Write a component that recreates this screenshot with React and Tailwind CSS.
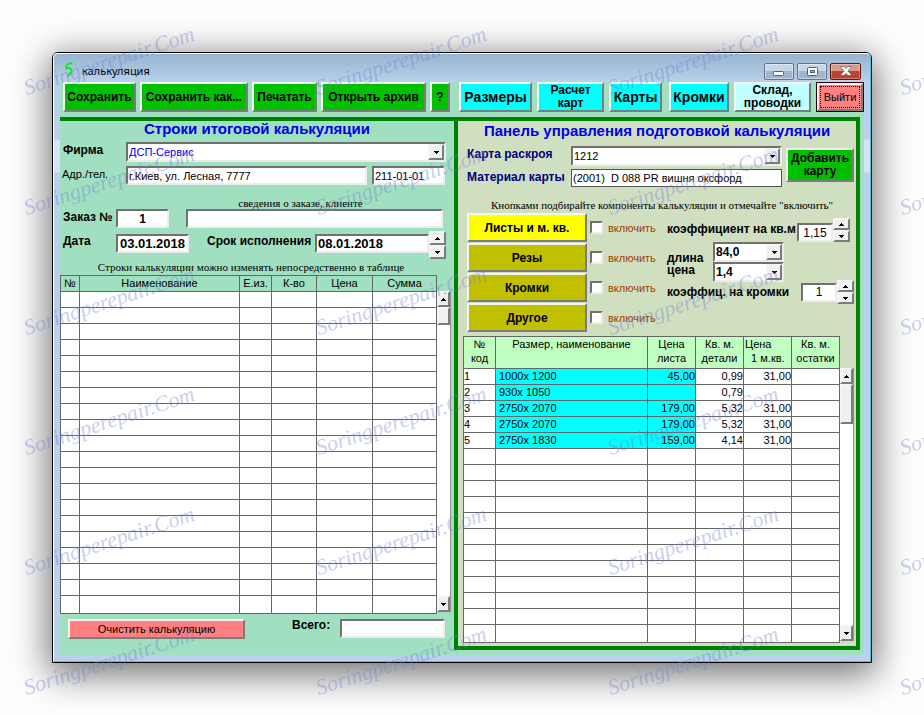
import { clsx } from 'clsx';

const SANS = "font-['Liberation_Sans',Arial,sans-serif]";
const SERIF = "font-['Liberation_Serif','Times_New_Roman',serif]";

const RAISED = 'border-2 border-t-[#f4f4f4] border-l-[#f4f4f4] border-r-[#7c7c7c] border-b-[#7c7c7c]';
const SUNKEN = 'border-2 border-t-[#707070] border-l-[#707070] border-r-[#ececec] border-b-[#ececec]';

const CARDS = [
  { id: 1, size: '1000x 1200', price: '45,00', area: '0,99', rate: '31,00' },
  { id: 2, size: '930x 1050', price: '', area: '0,79', rate: '' },
  { id: 3, size: '2750x 2070', price: '179,00', area: '5,32', rate: '31,00' },
  { id: 4, size: '2750x 2070', price: '179,00', area: '5,32', rate: '31,00' },
  { id: 5, size: '2750x 1830', price: '159,00', area: '4,14', rate: '31,00' },
];

const Triangle = ({ up }) => (
  <svg width="5" height="3" viewBox="0 0 5 3" shapeRendering="crispEdges" aria-hidden="true">
    <path d={up ? 'M2 0h1v1h1v1h1v1H0V2h1V1h1z' : 'M0 0h5v1H4v1H3v1H2V2H1V1H0z'} fill="#000" />
  </svg>
);

const Button = ({ className, children }) => (
  <button type="button" className={clsx('flex items-center justify-center text-center text-black', RAISED, className)}>
    {children}
  </button>
);

const Field = ({ className, ...props }) => (
  <input type="text" className={clsx('h-[19px] min-w-0 bg-white px-px leading-[15px] outline-none', SUNKEN, className)} {...props} />
);

const Combo = ({ id, value, className, selectClass }) => (
  <div className={clsx('relative h-5 min-w-0', className)}>
    <select id={id} className={clsx('block h-full w-full appearance-none bg-white px-px leading-4 outline-none', SUNKEN, selectClass)}>
      <option>{value}</option>
    </select>
    <span className={clsx('pointer-events-none absolute top-0.5 right-0.5 bottom-0.5 flex w-4 items-center justify-center bg-[#f0f0f0]', RAISED)}>
      <Triangle />
    </span>
  </div>
);

const Spinner = ({ className }) => (
  <div className={clsx('flex w-[17px] shrink-0 flex-col', className)}>
    <button type="button" aria-label="Больше" className={clsx('flex flex-1 items-center justify-center bg-[#f0f0f0]', RAISED)}>
      <Triangle up />
    </button>
    <button type="button" aria-label="Меньше" className={clsx('flex flex-1 items-center justify-center bg-[#f0f0f0]', RAISED)}>
      <Triangle />
    </button>
  </div>
);

const ScrollBar = ({ thumb, className }) => (
  <div className={clsx('flex w-3.5 shrink-0 flex-col border-r border-[#909090] bg-white', className)}>
    <span className={clsx('flex h-4 items-center justify-center bg-[#f0f0f0]', RAISED)}>
      <Triangle up />
    </span>
    <span className={clsx('bg-[#f0f0f0]', RAISED, thumb)} />
    <span className={clsx('mt-auto flex h-4 items-center justify-center bg-[#f0f0f0]', RAISED)}>
      <Triangle />
    </span>
  </div>
);

const Th = ({ className, children }) => (
  <th className={clsx('border-r border-b border-[#666] p-0 align-top font-normal', className)}>{children}</th>
);

const Td = ({ className, children }) => (
  <td className={clsx('overflow-hidden border-r border-b border-[#666] p-0 leading-[15px] whitespace-pre', className)}>{children}</td>
);

const TitleBar = () => (
  <header className="flex h-7 items-center pr-[3px] pl-1">
    <svg width="14" height="18" viewBox="0 0 14 18" className="mt-1" aria-hidden="true">
      <path d="M8.500 2.500H4.500L2 5.500l.500 2L5 7l2 1 .500 2.500L6 13l-3 2" fill="none" stroke="#00f020" strokeWidth="1.800" />
    </svg>
    <h1 className="mt-1.5 ml-1 font-['Noto_Sans','Open_Sans',sans-serif] text-[11px] leading-4">калькуляция</h1>
    <div className="mt-1.5 ml-auto flex gap-[3px]">
      <button type="button" aria-label="Свернуть" className="flex h-[17px] w-[30px] items-center justify-center rounded-xs border border-[#5f738c] bg-linear-to-b from-[#c6d6e8] from-45% to-[#9db5cf] to-50% shadow-[inset_0_0_0_1px_#ffffff70]">
        <svg width="12" height="5" viewBox="0 0 12 5" className="mt-1"><rect x=".5" y=".5" width="10" height="4" rx="1" fill="#fff" stroke="#555f70" /></svg>
      </button>
      <button type="button" aria-label="Развернуть" className="flex h-[17px] w-[30px] items-center justify-center rounded-xs border border-[#5f738c] bg-linear-to-b from-[#c6d6e8] from-45% to-[#9db5cf] to-50% shadow-[inset_0_0_0_1px_#ffffff70]">
        <svg width="11" height="9" viewBox="0 0 11 9">
          <rect x=".5" y=".5" width="10" height="8" rx="1" fill="#fff" stroke="#555f70" />
          <rect x="3.500" y="3.500" width="4" height="2" fill="#9db5cf" stroke="#555f70" />
        </svg>
      </button>
      <button type="button" aria-label="Закрыть" className="flex h-[17px] w-[31px] items-center justify-center rounded-xs border border-[#5c1a16] bg-linear-to-b from-[#dd9a8c] from-45% to-[#c0412a] to-50% shadow-[inset_0_0_0_1px_#ffffff50]">
        <svg width="12" height="10" viewBox="0 0 12 10">
          <path d="M1 .5h3l2 2 2-2h3v1.200L7.800 5 11 8.300v1.200H8l-2-2-2 2H1V8.300L4.200 5 1 1.700z" fill="#fff" stroke="#555f70" strokeWidth=".8" />
        </svg>
      </button>
    </div>
  </header>
);

const Toolbar = () => (
  <nav className="flex h-[30px] pl-[3px] text-xs font-bold whitespace-nowrap">
    <div className="flex gap-1">
      <Button className="w-[73px] bg-[#00c000]">Сохранить</Button>
      <Button className="w-[108px] bg-[#00c000]">Сохранить как...</Button>
      <Button className="w-[65px] bg-[#00c000]">Печатать</Button>
      <Button className="w-[105px] bg-[#00c000]">Открыть архив</Button>
      <Button className="w-5 bg-[#00c000]">?</Button>
    </div>
    <div className="ml-[9px] flex gap-[5px]">
      <Button className="w-[73px] bg-[#00ffff] text-sm">Размеры</Button>
      <Button className="w-[67px] bg-[#00ffff] leading-[13px]">Расчет<br />карт</Button>
      <Button className="w-[53px] bg-[#00ffff] text-sm">Карты</Button>
    </div>
    <div className="ml-auto flex gap-[5px]">
      <Button className="w-[60px] bg-[#00ffff] text-sm">Кромки</Button>
      <Button className="w-[77px] bg-[#c0ffff] leading-[13px]">Склад,<br />проводки</Button>
      <button type="button" className="w-12 border border-[#300000] bg-[#ff8080] text-[11px] font-normal">
        <span className={clsx('flex h-full items-center justify-center p-px', RAISED)}>
          <span className="flex h-full w-full items-center justify-center border border-dotted border-black">Выйти</span>
        </span>
      </button>
    </div>
  </nav>
);

const EstimatePanel = () => (
  <section className="flex min-w-0 flex-[394] flex-col text-[11px] leading-4">
    <h2 className="h-[21px] text-center text-[15px] leading-4 font-bold text-[#0000e8]">Строки итоговой калькуляции</h2>

    <div className="flex pr-2 pl-[3px]">
      <label htmlFor="firm" className="w-[63px] text-xs font-bold">Фирма</label>
      <Combo id="firm" value="ДСП-Сервис" className="flex-1" selectClass="text-[#0000e8]" />
    </div>
    <div className="mt-1 flex pr-[9px] pl-0.5">
      <label htmlFor="address" className="w-16">Адр./тел.</label>
      <Field id="address" defaultValue="г.Киев, ул. Лесная, 7777" className="flex-1" />
      <Field aria-label="Телефон" defaultValue="211-01-01" className="ml-[5px] w-[73px]" />
    </div>

    <p className={clsx('mt-3 h-3 pl-[87px] text-center leading-3', SERIF)}>сведения о заказе, клиенте</p>
    <div className="flex pr-[11px] pl-[3px]">
      <label htmlFor="order" className="w-[53px] text-xs font-bold whitespace-nowrap">Заказ №</label>
      <Field id="order" defaultValue="1" className="w-[53px] text-center text-xs font-bold" />
      <Field aria-label="Сведения о заказе" className="ml-[17px] flex-1" />
    </div>
    <div className="mt-[3px] flex h-7 items-start pr-2 pl-[3px] whitespace-nowrap">
      <label htmlFor="date" className="mt-0.5 w-[53px] text-xs font-bold">Дата</label>
      <Field id="date" defaultValue="03.01.2018" className="mt-[3px] w-[73px] text-center text-[13px] font-bold" />
      <label htmlFor="due" className="mt-0.5 ml-[18px] w-[108px] text-xs font-bold">Срок исполнения</label>
      <Field id="due" defaultValue="08.01.2018" className="mt-[3px] flex-1 text-[13px] font-bold" />
      <Spinner className="h-7" />
    </div>
    <p className={clsx('mt-0.5 h-3.5 pr-3 text-center leading-3 whitespace-nowrap', SERIF)}>
      Строки калькуляции можно изменять непосредственно в таблице
    </p>

    <div className="flex pr-[3px]">
      <table className="min-w-0 flex-1 table-fixed border-separate border-spacing-0 border-t border-l border-[#666]">
        <colgroup>
          <col className="w-[19px]" />
          <col />
          <col className="w-8" />
          <col className="w-[45px]" />
          <col className="w-14" />
          <col className="w-16" />
        </colgroup>
        <thead>
          <tr className="h-4 leading-[15px]">
            {['№', 'Наименование', 'Е.из.', 'К-во', 'Цена', 'Сумма'].map((title) => (
              <Th key={title}>{title}</Th>
            ))}
          </tr>
        </thead>
        <tbody className="bg-white">
          {Array.from({ length: 20 }, (_, row) => (
            <tr key={row} className="h-4 last:h-[18px]">
              <Td /><Td /><Td /><Td /><Td /><Td />
            </tr>
          ))}
        </tbody>
      </table>
      <ScrollBar thumb="h-[18px]" className="mt-4 mb-0.5" />
    </div>

    <div className="mt-[5px] flex items-start pr-[9px] pl-2">
      <Button className="h-5 w-[177px] bg-[#ff8080]">Очистить калькуляцию</Button>
      <label htmlFor="total" className="ml-auto w-12 text-xs leading-3 font-bold">Всего:</label>
      <Field id="total" className="w-[105px]" />
    </div>
  </section>
);

const Include = ({ label, active }) => (
  <div className="flex h-[29px] items-center">
    <Button className={clsx('h-full w-[120px] text-xs font-bold', active ? 'bg-[#ffff00]' : 'bg-[#c0c000]')}>{label}</Button>
    <label className="ml-[3px] flex items-center gap-[5px] text-[#a04000]">
      <input type="checkbox" className={clsx('size-[13px] appearance-none bg-white', SUNKEN)} />
      включить
    </label>
  </div>
);

const ControlPanel = () => (
  <section className="flex min-w-0 flex-[398] flex-col border-4 border-t-0 border-[#008000] bg-[#cfdfbf] pb-[3px] text-[11px] leading-4">
    <h2 className="h-[25px] text-center text-[15px] leading-5 font-bold whitespace-nowrap text-[#0000e8]">Панель управления подготовкой калькуляции</h2>

    <div className="flex items-start pr-0.5 pl-[9px]">
      <div className="grid min-w-0 flex-1 grid-cols-[104px_minmax(0,1fr)] gap-y-[3px]">
        <label htmlFor="card" className="text-xs font-bold whitespace-nowrap text-[#000080]">Карта раскроя</label>
        <Combo id="card" value="1212" />
        <label htmlFor="material" className="text-xs font-bold whitespace-nowrap text-[#000080]">Материал карты</label>
        <input id="material" type="text" defaultValue="(2001)  D 088 PR вишня оксфорд" className="h-[18px] min-w-0 border border-[#555] bg-white px-px outline-none" />
      </div>
      <Button className="mt-0.5 ml-1 h-[34px] w-[68px] bg-[#00c000] text-xs leading-[13px] font-bold">Добавить<br />карту</Button>
    </div>

    <p className={clsx('mt-3 h-[14px] pl-2.5 text-center leading-3 whitespace-nowrap', SERIF)}>
      Кнопками подбирайте компоненты калькуляции и отмечайте "включить"
    </p>

    <div className="flex pr-0.5 pl-[9px]">
      <div className="flex w-[200px] shrink-0 flex-col gap-px">
        <Include label="Листы и м. кв." active />
        <Include label="Резы" />
        <Include label="Кромки" />
        <Include label="Другое" />
      </div>
      <div className="flex min-w-0 flex-1 flex-col text-xs font-bold whitespace-nowrap">
        <div className="flex h-[29px] items-end pr-1">
          <label htmlFor="rate" className="h-[21px] flex-1">коэффициент на кв.м</label>
          <Field id="rate" defaultValue="1,15" className="w-9 text-center font-normal" />
          <Spinner className="h-6" />
        </div>
        <div className="grid grid-cols-[46px_71px] grid-rows-[20px_20px]">
          <label htmlFor="length" className="pt-2 leading-4">длина</label>
          <Combo id="length" value="84,0" />
          <label htmlFor="price" className="leading-4">цена</label>
          <Combo id="price" value="1,4" />
        </div>
        <div className="-mt-0.5 flex h-6 items-center">
          <label htmlFor="edge" className="flex-1">коэффиц. на кромки</label>
          <Field id="edge" defaultValue="1" className="w-9 text-center font-normal" />
          <Spinner className="h-6" />
        </div>
      </div>
    </div>

    <div className="mt-1 flex pr-0.5 pl-[5px]">
      <table className="min-w-0 flex-1 table-fixed border-separate border-spacing-0 border-t border-l border-[#666]">
        <colgroup>
          <col className="w-8" />
          <col />
          <col className="w-12" />
          <col className="w-12" />
          <col className="w-12" />
          <col className="w-12" />
        </colgroup>
        <thead>
          <tr className="h-8 bg-[#c0ffc0] leading-[14px]">
            <Th>№<br />код</Th>
            <Th>Размер, наименование</Th>
            <Th>Цена<br />листа</Th>
            <Th>Кв. м.<br />детали</Th>
            <Th className="pl-px text-left whitespace-pre">Цена<br />{'  1 м.кв.'}</Th>
            <Th>Кв. м.<br />остатки</Th>
          </tr>
        </thead>
        <tbody className="bg-white">
          {CARDS.map((card) => (
            <tr key={card.id} className="h-4">
              <Td>{card.id}</Td>
              <Td className="bg-[#00ffff] pl-[3px]">{card.size}</Td>
              <Td className="bg-[#00ffff] text-right">{card.price}</Td>
              <Td className="text-right">{card.area}</Td>
              <Td className="text-right">{card.rate}</Td>
              <Td />
            </tr>
          ))}
          {Array.from({ length: 12 }, (_, row) => (
            <tr key={row} className="h-4 last:h-[18px]">
              <Td /><Td /><Td /><Td /><Td /><Td />
            </tr>
          ))}
        </tbody>
      </table>
      <ScrollBar thumb="h-10" className="mt-8 mb-0.5" />
    </div>
  </section>
);

const Watermark = () => (
  <div aria-hidden="true" className="pointer-events-none absolute inset-0 overflow-hidden">
    <div className="grid w-max grid-cols-[repeat(4,292px)] auto-rows-[120px]">
      {Array.from({ length: 24 }, (_, i) => (
        <div key={i} className="flex items-end pb-5 pl-7">
          <span className={clsx('origin-bottom-left -rotate-18 text-[22px] leading-6 text-[#7080d0]/40 italic', SERIF)}>
            Soringperepair.Com
          </span>
        </div>
      ))}
    </div>
  </div>
);

export default function App() {
  return (
    <main className={clsx('relative min-h-screen overflow-hidden bg-[#fefefe] p-13 text-black', SANS)}>
      <div className="rounded-t-md border border-black shadow-[0_8px_36px_4px_rgba(0,0,0,0.55)]">
        <div className="rounded-t-[5px] border border-t-white border-r-[#40c8e8] border-b-[#40c8e8] border-l-white bg-[linear-gradient(#98b4d0_0,#b9d1ea_28px,#b9d1ea_85px,#d6e4f8_86px,#d6e4f8_118px,#b9d1ea_119px)] px-1.5 pb-1.5">
          <TitleBar />
          <div className="bg-[#a0dfc0] pb-[5px]">
            <Toolbar />
            <div className="mt-[5px] mr-1 border-t-4 border-[#008000]">
              <div className="flex">
                <EstimatePanel />
                <ControlPanel />
              </div>
            </div>
          </div>
        </div>
      </div>
      <Watermark />
    </main>
  );
}
